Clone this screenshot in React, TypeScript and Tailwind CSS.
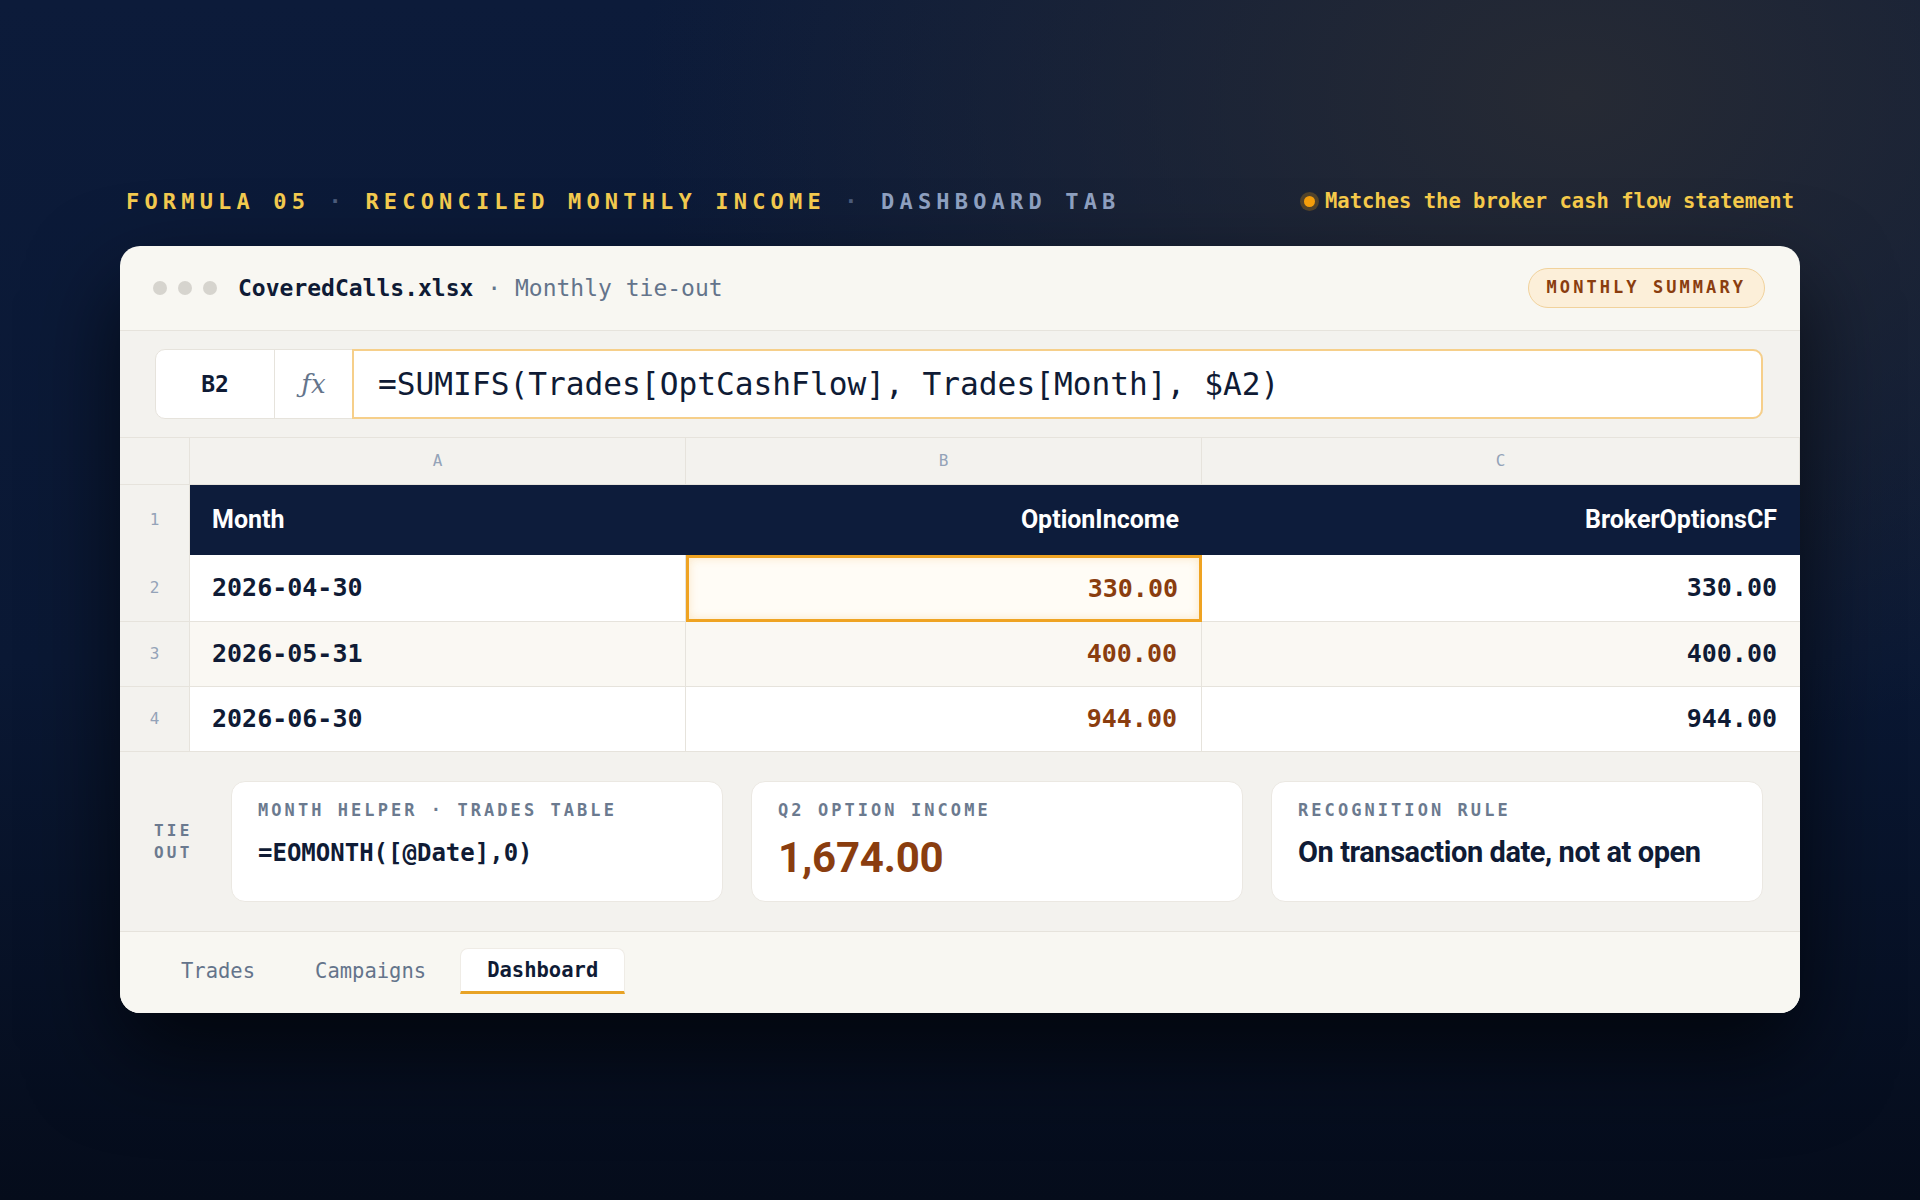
const mono = { fontFamily: '"DejaVu Sans Mono", "Liberation Mono", monospace' };

const rows = [
  { n: "2", month: "2026-04-30", income: "330.00", broker: "330.00", bg: "bg-white", selected: true },
  { n: "3", month: "2026-05-31", income: "400.00", broker: "400.00", bg: "bg-[#faf8f3]", selected: false },
  { n: "4", month: "2026-06-30", income: "944.00", broker: "944.00", bg: "bg-white", selected: false },
];

function TieCard({ label, children }: { label: string; children: React.ReactNode }) {
  return (
    <div className="h-[121px] rounded-[14px] border border-[#ebe8e2] bg-white px-[26px] pt-[16px]">
      <div className="font-['DejaVu_Sans_Mono',monospace] text-[17px] font-semibold uppercase tracking-[0.18em] text-[#6b7a8f]">
        {label}
      </div>
      {children}
    </div>
  );
}

export default function App() {
  return (
    <div className="min-h-screen w-full bg-[radial-gradient(ellipse_at_82%_8%,#262a34_0%,rgba(38,42,52,0)_42%),linear-gradient(180deg,#0c1b3a_0%,#0a1834_55%,#050c1b_100%)] px-[120px] pt-[186px] pb-[187px] font-['Roboto',sans-serif]">
      {/* top caption */}
      <div className="mb-[30px] flex h-[30px] items-center justify-between px-[6px]" style={mono}>
        <div className="text-[22px] font-bold uppercase tracking-[0.235em] text-[#f2c94e]">
          FORMULA 05 <span className="text-[#4b5b7a]">·</span> RECONCILED MONTHLY INCOME{" "}
          <span className="text-[#4b5b7a]">·</span> <span className="text-[#8d9fbf]">DASHBOARD TAB</span>
        </div>
        <div className="flex items-center gap-[10px] text-[20.5px] font-semibold text-[#f5c94a]">
          <span className="h-[11px] w-[11px] rounded-full bg-[#f59e0b] ring-4 ring-[#f59e0b]/25"></span>
          Matches the broker cash flow statement
        </div>
      </div>

      {/* workbook card */}
      <div className="overflow-hidden rounded-[20px] bg-[#f8f7f2] shadow-[0_40px_90px_rgba(0,0,0,0.65)]">
        {/* title bar */}
        <div className="flex h-[85px] items-center justify-between border-b border-[#e6e3dc] pl-[33px] pr-[35px]">
          <div className="flex items-center" style={mono}>
            <div className="mr-[21px] flex gap-[11px]">
              <span className="h-[14px] w-[14px] rounded-full bg-[#d6d4ce]"></span>
              <span className="h-[14px] w-[14px] rounded-full bg-[#d6d4ce]"></span>
              <span className="h-[14px] w-[14px] rounded-full bg-[#d6d4ce]"></span>
            </div>
            <span className="text-[23px] font-bold text-[#0f1b35]">CoveredCalls.xlsx</span>
            <span className="text-[23px] text-[#64748b]">&nbsp;·&nbsp;Monthly tie-out</span>
          </div>
          <div
            className="flex h-[40px] items-center rounded-full border border-[#f1d29c] bg-[#fcefd9] px-[18px] text-[17px] font-bold tracking-[0.18em] text-[#8a3d0f]"
            style={mono}
          >
            MONTHLY SUMMARY
          </div>
        </div>

        {/* formula bar */}
        <div className="border-b border-[#e6e3dc] bg-[#f3f2ee] pl-[35px] pr-[37px] py-[18px]">
          <div className="flex h-[70px] rounded-[10px] border border-[#e6e3dc] bg-white" style={mono}>
            <div className="flex w-[119px] items-center justify-center border-r border-[#e6e3dc] text-[23px] font-bold text-[#0f1b35]">
              B2
            </div>
            <div className="flex w-[77px] items-center justify-center font-['DejaVu_Serif',serif] text-[26px] italic text-[#64748b]">
              ƒx
            </div>
            <div className="-my-px -mr-px flex flex-1 items-center rounded-r-[10px] border-2 border-[#f6cf8a] pl-[24px] text-[31.2px] font-medium text-[#0f1b35]">
              =SUMIFS(Trades[OptCashFlow], Trades[Month], $A2)
            </div>
          </div>
        </div>

        {/* grid */}
        <div className="grid grid-cols-[70px_496px_516px_1fr]">
          <div className="h-[47px] border-b border-r border-[#e6e3dc] bg-[#f3f2ee]"></div>
          {["A", "B", "C"].map((c) => (
            <div
              key={c}
              className="flex h-[47px] items-center justify-center border-b border-r border-[#e6e3dc] bg-[#f3f2ee] text-[16px] text-[#94a3b8] last:border-r-0"
              style={mono}
            >
              {c}
            </div>
          ))}

          <div className="flex h-[70px] items-center justify-center border-r border-[#e6e3dc] bg-[#f3f2ee] text-[16px] text-[#94a3b8]" style={mono}>
            1
          </div>
          <div className="flex h-[70px] items-center bg-[#0d1c3b] pl-[22px] text-[25px] font-bold text-white">Month</div>
          <div className="flex h-[70px] items-center justify-end bg-[#0d1c3b] pr-[23px] text-[25px] font-bold text-white">
            OptionIncome
          </div>
          <div className="flex h-[70px] items-center justify-end bg-[#0d1c3b] pr-[23px] text-[25px] font-bold text-white">
            BrokerOptionsCF
          </div>

          {rows.map((r, i) => (
            <div key={r.n} className="contents">
              <div
                className={`flex ${i === 0 ? "h-[67px]" : "h-[65px]"} items-center justify-center border-r border-b border-[#e6e3dc] bg-[#f3f2ee] text-[16px] text-[#94a3b8]`}
                style={mono}
              >
                {r.n}
              </div>
              <div
                className={`flex items-center border-r border-b border-[#e6e3dc] ${r.bg} pl-[22px] text-[25px] font-semibold text-[#0f1b35]`}
                style={mono}
              >
                {r.month}
              </div>
              {r.selected ? (
                <div
                  className="flex items-center justify-end border-[3px] border-[#efa322] bg-[#fffcf6] pr-[21px] text-[25px] font-semibold text-[#8a3d0f] shadow-[inset_0_0_10px_rgba(246,207,138,0.45)]"
                  style={mono}
                >
                  {r.income}
                </div>
              ) : (
                <div
                  className={`flex items-center justify-end border-r border-b border-[#e6e3dc] ${r.bg} pr-[24px] text-[25px] font-semibold text-[#8a3d0f]`}
                  style={mono}
                >
                  {r.income}
                </div>
              )}
              <div
                className={`flex items-center justify-end border-b border-[#e6e3dc] ${r.bg} pr-[23px] text-[25px] font-semibold text-[#0f1b35]`}
                style={mono}
              >
                {r.broker}
              </div>
            </div>
          ))}
        </div>

        {/* tie out */}
        <div className="grid grid-cols-[49px_1fr_1fr_1fr] gap-x-[28px] bg-[#f3f2ee] pl-[34px] pr-[37px] py-[29px]">
          <div className="flex flex-col justify-center text-[16px] font-bold leading-[22px] tracking-[0.2em] text-[#6b7a8f]" style={mono}>
            <span>TIE</span>
            <span>OUT</span>
          </div>
          <TieCard label="Month helper · Trades table">
            <div className="mt-[11px] text-[24px] font-bold text-[#0f1b35]" style={mono}>
              =EOMONTH([@Date],0)
            </div>
          </TieCard>
          <TieCard label="Q2 option income">
            <div className="mt-[2px] text-[42px] font-bold tracking-[-0.005em] text-[#8a3d0f]">1,674.00</div>
          </TieCard>
          <TieCard label="Recognition rule">
            <div className="mt-[7px] text-[29px] font-bold tracking-[-0.015em] text-[#0f1b35]">On transaction date, not at open</div>
          </TieCard>
        </div>

        {/* sheet tabs */}
        <div className="flex h-[82px] items-start gap-[8px] border-t border-[#e6e3dc] bg-[#f8f7f2] pl-[35px] pt-[16px]" style={mono}>
          <div className="flex h-[46px] items-center px-[26px] text-[20.5px] text-[#64748b]">Trades</div>
          <div className="flex h-[46px] items-center px-[26px] text-[20.5px] text-[#64748b]">Campaigns</div>
          <div className="flex h-[46px] items-center rounded-t-[8px] border border-b-[3px] border-[#efece6] border-b-[#e8a325] bg-white px-[26px] text-[20.5px] font-bold text-[#0f1b35]">
            Dashboard
          </div>
        </div>
      </div>
    </div>
  );
}
